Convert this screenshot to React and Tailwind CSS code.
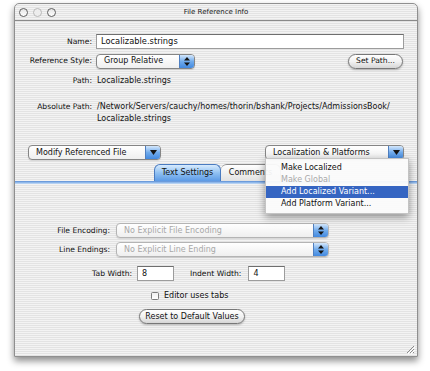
// App.jsx — "File Reference Info" inspector window (Aqua look)

const stripes =
  "bg-[image:repeating-linear-gradient(180deg,#f3f3f3_0px,#f3f3f3_1px,#e3e3e3_1px,#e3e3e3_2px)]";

const Arrow = ({ single }) =>
  single ? (
    <svg width="7" height="5" viewBox="0 0 7 5">
      <path d="M0 0H7L3.5 5Z" fill="#151515" />
    </svg>
  ) : (
    <svg width="6" height="9" viewBox="0 0 6 9">
      <path d="M3 0L6 3.5H0Z M3 9L0 5.5H6Z" fill="#151515" />
    </svg>
  );

const Popup = ({ className, children, single, disabled }) => (
  <div
    className={`flex h-[15px] rounded-[4px] border ${
      disabled ? "border-[#b4b4b4]" : "border-[#858585]"
    } bg-linear-to-b from-white to-[#efefef] shadow-[0_1px_1px_rgba(0,0,0,0.12)] overflow-hidden ${className}`}
  >
    <div
      className={`flex-1 flex items-center pl-[7px] leading-none ${
        disabled ? "text-[#a8a8a8]" : "text-[#111]"
      }`}
    >
      {children}
    </div>
    <div className="w-[15px] flex items-center justify-center border-l border-[#4f7fc0] bg-linear-to-b from-[#d4e7fb] via-[#70abec] to-[#4289e0]">
      <Arrow single={single} />
    </div>
  </div>
);

const Button = ({ className, children }) => (
  <div
    className={`flex items-center justify-center h-[15px] rounded-full border border-[#777] bg-linear-to-b from-white via-[#f2f2f2] to-[#d6d6d6] shadow-[0_1px_2px_rgba(0,0,0,0.25)] text-[#111] leading-none ${className}`}
  >
    {children}
  </div>
);

const Field = ({ className, children }) => (
  <div
    className={`flex items-center h-[15px] bg-white border border-[#9c9c9c] border-t-[#6e6e6e] pl-[4px] text-[#111] leading-none ${className}`}
  >
    {children}
  </div>
);

const Light = ({ pale }) => (
  <div
    className={`w-[9px] h-[9px] rounded-full border-[1.5px] ${
      pale ? "border-[#b9b9b9] bg-[#ededed]" : "border-[#5e5e5e] bg-linear-to-b from-[#e4e4e4] to-white"
    }`}
  />
);

export default function App() {
  return (
    <div className="w-[430px] h-[371px] bg-white pt-[3px] pl-[14px] font-['DejaVu_Sans',sans-serif] text-[8px] text-[#111]">
      <div
        className={`relative w-[404px] h-[354px] border border-[#8f8f8f] rounded-t-[5px] shadow-[0_4px_7px_rgba(0,0,0,0.45)] ${stripes} flex flex-col`}
      >
        {/* title bar */}
        <div className="relative h-[17px] flex items-center border-b border-[#8a8a8a] shrink-0">
          <div className="flex gap-[5px] pl-[4px]">
            <Light />
            <Light pale />
            <Light />
          </div>
          <div className="absolute inset-0 flex items-center justify-center text-[7px] text-[#222]">
            File Reference Info
          </div>
        </div>

        {/* Name */}
        <div className="flex items-center mt-[13px]">
          <div className="w-[77px] text-right text-[7.6px]">Name:</div>
          <Field className="ml-[4px] w-[308px] text-[8.3px]">Localizable.strings</Field>
        </div>

        {/* Reference style */}
        <div className="flex items-center mt-[4px] h-[16px]">
          <div className="w-[77px] text-right text-[7.6px]">Reference Style:</div>
          <Popup className="ml-[4px] w-[99px]">Group Relative</Popup>
          <Button className="ml-auto mr-[14px] w-[55px] text-[7.6px]">Set Path...</Button>
        </div>

        {/* Path */}
        <div className="flex items-center mt-[6px] h-[12px]">
          <div className="w-[77px] text-right text-[7.6px]">Path:</div>
          <div className="ml-[5px]">Localizable.strings</div>
        </div>

        {/* Absolute path */}
        <div className="flex mt-[14px] leading-[12px]">
          <div className="w-[77px] text-right text-[7.6px]">Absolute Path:</div>
          <div className="ml-[5px]">
            <div>/Network/Servers/cauchy/homes/thorin/bshank/Projects/AdmissionsBook/</div>
            <div>Localizable.strings</div>
          </div>
        </div>

        {/* action popups */}
        <div className="flex items-center mt-[20px]">
          <Popup single className="ml-[13px] w-[133px]">Modify Referenced File</Popup>
          <Popup single className="ml-auto mr-[13px] w-[139px]">Localization &amp; Platforms</Popup>
        </div>

        {/* tabs */}
        <div className="mt-[4px] flex justify-center pl-[3px]">
          <div className="flex">
            <div className="h-[17px] w-[67px] flex items-center justify-center rounded-t-[6px] border border-b-0 border-[#4a7bc0] bg-linear-to-b from-[#d8ebfd] via-[#8fc0f2] to-[#5c9ae5] text-[#111]">
              Text Settings
            </div>
            <div className="h-[17px] w-[60px] flex items-center justify-center rounded-t-[6px] border border-b-0 border-l-0 border-[#8a8a8a] bg-linear-to-b from-white to-[#e2e2e2] text-[#111]">
              Comments
            </div>
          </div>
        </div>
        <div className="h-[3px] bg-linear-to-b from-[#5b8dd4] via-[#8fb8ea] to-[#c9def6]" />

        {/* tab pane */}
        <div className="flex items-center mt-[39px]">
          <div className="w-[95px] text-right text-[7.6px]">File Encoding:</div>
          <Popup disabled className="ml-[6px] w-[213px]">No Explicit File Encoding</Popup>
        </div>
        <div className="flex items-center mt-[4px]">
          <div className="w-[95px] text-right text-[7.6px]">Line Endings:</div>
          <Popup disabled className="ml-[6px] w-[213px]">No Explicit Line Ending</Popup>
        </div>
        <div className="flex items-center mt-[9px]">
          <div className="w-[117px] text-right text-[7.6px]">Tab Width:</div>
          <Field className="ml-[5px] w-[37px]">8</Field>
          <div className="ml-[16px] text-[7.6px]">Indent Width:</div>
          <Field className="ml-[7px] w-[37px]">4</Field>
        </div>
        <div className="flex items-center mt-[10px] ml-[136px] h-[10px]">
          <div className="w-[8px] h-[8px] rounded-[1.5px] border border-[#7d7d7d] bg-linear-to-b from-[#f0f0f0] to-white" />
          <div className="ml-[5px]">Editor uses tabs</div>
        </div>
        <div className="mt-[8px] ml-[124px]">
          <Button className="w-[106px] h-[14px]">Reset to Default Values</Button>
        </div>

        {/* resize grip */}
        <svg className="absolute right-[2px] bottom-[2px]" width="9" height="9" viewBox="0 0 9 9">
          <path d="M8 1L1 8M8 4L4 8M8 7L7 8" stroke="#8a8a8a" strokeWidth="1" />
          <path d="M9 2L2 9M9 5L5 9" stroke="#ffffff" strokeWidth="1" />
        </svg>

        {/* open pull-down menu */}
        <div className="absolute left-[250px] top-[154px] w-[144px] pt-[3px] pb-[3px] bg-[#fbfbfb]/95 border border-[#c4c4c4] shadow-[0_3px_8px_rgba(0,0,0,0.4)]">
          <div className="h-[12px] flex items-center pl-[15px]">Make Localized</div>
          <div className="h-[12px] flex items-center pl-[15px] text-[#a9a9a9]">Make Global</div>
          <div className="h-[12px] flex items-center pl-[15px] bg-[#3565c2] text-white">
            Add Localized Variant...
          </div>
          <div className="h-[12px] flex items-center pl-[15px]">Add Platform Variant...</div>
        </div>
      </div>
    </div>
  );
}
